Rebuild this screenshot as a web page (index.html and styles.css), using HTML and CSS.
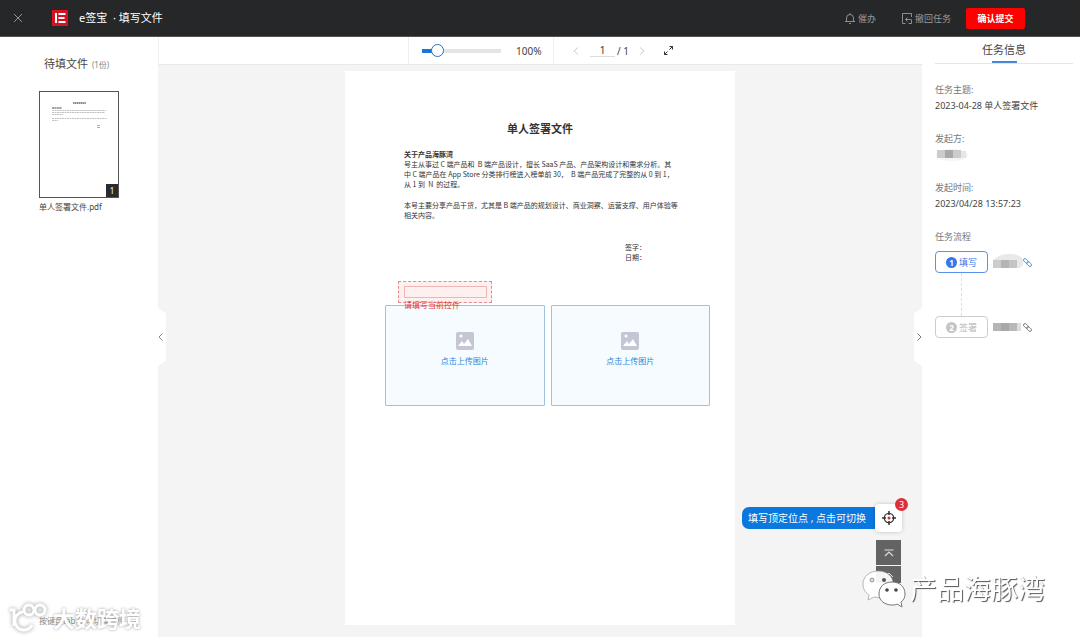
FILE: index.html
```html
<!DOCTYPE html>
<html lang="zh-CN">
<head>
    <meta charset="UTF-8">
    <meta name="viewport" content="width=device-width, initial-scale=1.0">
    <title>e签宝 · 填写文件</title>
    <link rel="stylesheet" href="styles.css">
</head>
<body>
<header class="header">
    <button class="icon-btn close" aria-label="关闭">
        <svg width="10" height="10" viewBox="0 0 10 10"><path d="M1 1l8 8M9 1l-8 8" stroke="#929292" fill="none"/></svg>
    </button>
    <svg class="logo" width="16" height="16" viewBox="0 0 16 16">
        <rect width="16" height="16" fill="#d5121e"/>
        <path d="M4 3v10M6.500 4h7M6.500 8h6M6.500 12h7" stroke="#fff" stroke-width="2" fill="none"/>
    </svg>
    <h1>e签宝 &nbsp;·&nbsp;填写文件</h1>
    <div class="header-actions">
        <button class="text-btn">
            <svg width="10" height="11" viewBox="0 0 10 11" fill="none" stroke="#999" stroke-width=".9"><path d="M1.500 8.500V5a3.500 3.500 0 0 1 7 0v3.500M0 8.500h10M4 10.500h2M5 1.500V0"/></svg>
            催办
        </button>
        <button class="text-btn recall">
            <svg width="10" height="11" viewBox="0 0 10 11" fill="none" stroke="#999" stroke-width=".9"><path d="M9.500 4V.5h-9v10h3M9.500 6.500v4h-3M9 6.500H3.500M5.500 4.500l-2 2 2 2"/></svg>
            撤回任务
        </button>
        <button class="submit">确认提交</button>
    </div>
</header>

<div class="container">
    <aside class="files">
        <h2>待填文件 <small>(1份)</small></h2>
        <a class="file" href="#doc">
            <span class="thumb">
                <svg width="78" height="105" viewBox="0 0 78 105" fill="none" stroke="#aaa">
                    <path d="M33 11h13" stroke="#666" stroke-width="1.500" stroke-dasharray="1.500 .4"/>
                    <path d="M12 16h10" stroke="#444" stroke-dasharray="2 .4"/>
                    <path d="M12 18.500h54M12 20.500h53M12 22.500h11M12 26.500h55M12 28.500h6" stroke-width=".7" stroke-dasharray="2 .5"/>
                    <path d="M57 33.500h3M57 35.500h3" stroke="#888" stroke-width=".7"/>
                </svg>
                <span class="page-no">1</span>
            </span>
            单人签署文件.pdf
        </a>
        <p class="hint">按键盘tab键 可切换文件</p>
        <button class="handle handle-left" aria-label="收起">
            <svg width="5" height="8" viewBox="0 0 5 8"><path d="M4.500.5L1 4l3.500 3.500" stroke="#888" fill="none"/></svg>
        </button>
    </aside>

    <main class="viewer">
        <div class="toolbar">
            <div class="zoom">
                <input type="range" min="0" max="100" value="14" aria-label="缩放">
                <span>100%</span>
            </div>
            <div class="pager">
                <button class="icon-btn" aria-label="上一页">
                    <svg width="6" height="8" viewBox="0 0 6 8"><path d="M5 .5L1 4l4 3.500" stroke="#ccc" fill="none"/></svg>
                </button>
                <input type="text" value="1" aria-label="页码">
                <span>/ 1</span>
                <button class="icon-btn next" aria-label="下一页">
                    <svg width="6" height="8" viewBox="0 0 6 8"><path d="M1 .5L5 4 1 7.500" stroke="#ccc" fill="none"/></svg>
                </button>
                <button class="icon-btn full" aria-label="全屏">
                    <svg width="9" height="9" viewBox="0 0 9 9"><path d="M5.500.5h3v3M8.500.5l-3 3M3.500 8.500h-3v-3M.5 8.500l3-3" stroke="#333" fill="none"/></svg>
                </button>
            </div>
        </div>

        <article class="page" id="doc">
            <h2>单人签署文件</h2>
            <div class="doc-text">
                <h3>关于产品海豚湾</h3>
                <p>号主从事过 C 端产品和&nbsp; B 端产品设计，擅长 SaaS 产品、产品架构设计和需求分析。其<br>
                中 C 端产品在 App Store 分类排行榜进入榜单前 30，&nbsp; B 端产品完成了完整的从 0 到 1，<br>
                从 1 到&nbsp; N&nbsp; 的过程。</p>
                <p>本号主要分享产品干货，尤其是 B 端产品的规划设计、商业洞察、运营支撑、用户体验等<br>
                相关内容。</p>
            </div>
            <p class="sign">签字：<br>日期：</p>
            <div class="field">
                <input type="text" id="field1" aria-describedby="field1-error" aria-label="填写控件">
                <label class="error" id="field1-error" for="field1">请填写当前控件</label>
            </div>
            <div class="uploads">
                <button class="upload">
                    <svg width="18" height="18" viewBox="0 0 18 18"><rect width="18" height="18" rx="2" fill="#c4c6d6"/><circle cx="5" cy="4" r="1.500" fill="#fff"/><path d="M2 14l4-5 2 3 4-5 4 7z" fill="#fff"/></svg>
                    点击上传图片
                </button>
                <button class="upload">
                    <svg width="18" height="18" viewBox="0 0 18 18"><rect width="18" height="18" rx="2" fill="#c4c6d6"/><circle cx="5" cy="4" r="1.500" fill="#fff"/><path d="M2 14l4-5 2 3 4-5 4 7z" fill="#fff"/></svg>
                    点击上传图片
                </button>
            </div>
        </article>

        <div class="float-tools">
            <div class="locator">
                <span class="tip">填写顶定位点 , 点击可切换</span>
                <button class="target" aria-label="定位">
                    <svg width="14" height="14" viewBox="0 0 14 14" fill="none" stroke="#333"><circle cx="7" cy="7" r="4.700" stroke-width="1.300"/><path d="M7 0v4M7 10v4M0 7h4M10 7h4" stroke-width="1.500"/><circle cx="7" cy="7" r="1.500" fill="#e02b33" stroke="none"/></svg>
                    <span class="count">3</span>
                </button>
            </div>
            <button class="jump" aria-label="回到顶部">
                <svg width="10" height="8" viewBox="0 0 10 8"><path d="M.5 1h9M1 7l4-4 4 4" stroke="#ddd" stroke-width="1.200" fill="none"/></svg>
            </button>
            <button class="jump jump-down" aria-label="上一项">
                <svg width="10" height="6" viewBox="0 0 10 6"><path d="M1 5l4-4 4 4" stroke="#ddd" fill="none"/></svg>
            </button>
        </div>
    </main>

    <aside class="info">
        <button class="handle handle-right" aria-label="收起">
            <svg width="5" height="8" viewBox="0 0 5 8"><path d="M.5.5L4 4 .5 7.500" stroke="#777" fill="none"/></svg>
        </button>
        <h2>任务信息</h2>
        <dl>
            <dt>任务主题:</dt>
            <dd>2023-04-28 单人签署文件</dd>
            <dt>发起方:</dt>
            <dd>
                <svg width="34" height="14" viewBox="0 0 34 14"><ellipse cx="17" cy="8" rx="16" ry="6" fill="#f5f5f5"/><path d="M2 3h8v8H2z" fill="#ccc"/><path d="M10 3h8v8h-8z" fill="#a9a9a9"/><path d="M18 3h8v8h-8z" fill="#ccc"/><path d="M26 4h5v7h-5z" fill="#e6e6e6"/></svg>
            </dd>
            <dt>发起时间:</dt>
            <dd>2023/04/28 13:57:23</dd>
        </dl>
        <h3>任务流程</h3>
        <ol class="steps">
            <li class="active">
                <button><b>1</b>填写</button>
                <svg class="name" width="31" height="20" viewBox="0 0 31 20"><path d="M1 8Q8 1 20 2q9 1 11 6v5l-3 3H1z" fill="#e9e9e9"/><path d="M1 8h8v8H1z" fill="#ccc"/><path d="M9 8h8v8H9z" fill="#b5b5b5"/><path d="M17 8h8v8h-8z" fill="#c4c4c4"/></svg>
                <a class="link" href="#link" aria-label="复制链接"><svg width="9" height="9" viewBox="0 0 9 9" fill="none" stroke="currentColor" stroke-width=".9"><g transform="rotate(45 4.500 4.500)"><rect x="-.5" y="3" width="5.500" height="3" rx="1.500"/><rect x="4" y="3" width="5.500" height="3" rx="1.500"/></g></svg></a>
            </li>
            <li>
                <button><b>2</b>签署</button>
                <svg class="name" width="31" height="16" viewBox="0 0 31 16"><path d="M1 4h28v8H1z" fill="#dedede"/><path d="M1 4h8v8H1z" fill="#b5b5b5"/><path d="M9 4h8v8H9z" fill="#a8a8a8"/><path d="M17 4h8v8h-8z" fill="#b8b8b8"/></svg>
                <a class="link" href="#link" aria-label="复制链接"><svg width="9" height="9" viewBox="0 0 9 9" fill="none" stroke="currentColor" stroke-width=".9"><g transform="rotate(45 4.500 4.500)"><rect x="-.5" y="3" width="5.500" height="3" rx="1.500"/><rect x="4" y="3" width="5.500" height="3" rx="1.500"/></g></svg></a>
            </li>
        </ol>
    </aside>
</div>

<div class="mark mark-left">
    <svg width="42" height="30" viewBox="0 0 42 30" fill="none" stroke="#fff" stroke-width="3">
        <path d="M2 7h4v16M15 9a9 9 0 1 0 9 13"/><circle cx="21" cy="7" r="5"/><circle cx="32" cy="7" r="5"/>
    </svg>
    <span>大数跨境</span>
</div>
<div class="mark mark-right">
    <svg width="44" height="38" viewBox="0 0 44 38">
        <path d="M16 1C7 1 1 7 1 14c0 5 2 8 6 11l-1 5 6-3c14 3 19-4 19-13C31 6 25 1 16 1z" fill="#fff" fill-opacity=".93" stroke="#999" stroke-width=".7"/>
        <circle cx="10" cy="10" r="2" fill="#ddd" stroke="#777" stroke-width=".7"/><circle cx="22" cy="10" r="2" fill="#555"/>
        <path d="M30 12c-8 0-13 5-13 12s6 11 13 11c2 0 4 0 5-1l5 3-1-5c3-2 4-5 4-8 0-7-5-12-13-12z" fill="#fff" stroke="#777"/>
        <circle cx="25" cy="20" r="1.800" fill="#444"/><circle cx="34" cy="20" r="1.800" fill="#444"/>
    </svg>
    <span>产品海豚湾</span>
</div>
</body>
</html>
```
FILE: styles.css
```css
* {
    box-sizing: border-box;
}

body {
    margin: 0;
    min-height: 100vh;
    display: flex;
    flex-direction: column;
    font-family: "Noto Sans", "Noto Sans CJK SC", sans-serif;
    font-size: 9px;
    color: #444;
    background-color: #fff;
}

h1, h2, h3, p, dl, dd, ol {
    margin: 0;
    padding: 0;
    font-weight: normal;
}

button {
    margin: 0;
    padding: 0;
    border: none;
    background: none;
    font: inherit;
    color: inherit;
    cursor: pointer;
}

svg {
    display: block;
    flex: none;
}

/* header */
.header {
    display: flex;
    align-items: center;
    height: 37px;
    padding: 0 55px 0 13px;
    background-color: #252729;
    border-bottom: 1px solid #505254;
}

.icon-btn {
    display: flex;
}

.logo {
    margin-left: 29px;
}

.header h1 {
    margin-left: 11px;
    font-size: 11px;
    line-height: 16px;
    color: #fff;
}

.header-actions {
    display: flex;
    align-items: center;
    margin-left: auto;
}

.text-btn {
    display: flex;
    align-items: center;
    gap: 3px;
    color: #999;
}

.recall {
    margin: 0 15px 0 26px;
}

.submit {
    width: 59px;
    height: 21px;
    border-radius: 2px;
    background-color: #fe0000;
    color: #fff;
    font-weight: bold;
}

/* layout */
.container {
    flex: 1;
    display: grid;
    grid-template-columns: 158px 1fr 158px;
}

.files,
.info {
    position: relative;
    background-color: #fff;
}

.files {
    display: flex;
    flex-direction: column;
    padding: 19px 0 8px 39px;
}

.files h2 {
    padding-left: 5px;
    font-size: 11px;
    line-height: 16px;
}

.files small {
    margin-left: 1px;
    font-size: 8px;
    color: #888;
}

.file {
    width: 80px;
    margin-top: 18px;
    color: #444;
    font-size: 8px;
    line-height: 18px;
    text-decoration: none;
    white-space: nowrap;
}

.thumb {
    position: relative;
    display: block;
    height: 107px;
    border: 1px solid #555;
}

.page-no {
    position: absolute;
    right: 0;
    bottom: 0;
    width: 12px;
    height: 13px;
    background-color: #2b2b2b;
    color: #fff;
    line-height: 13px;
    text-align: center;
}

.hint {
    margin-top: auto;
    font-size: 8px;
    line-height: 16px;
    color: #888;
}

.handle {
    position: absolute;
    z-index: 1;
    top: 50%;
    width: 8px;
    height: 58px;
    margin-top: -29px;
    display: flex;
    align-items: center;
    background-color: #fff;
}

.handle-left {
    right: -8px;
    clip-path: polygon(0 0, 100% 10%, 100% 90%, 0 100%);
}

.handle-right {
    left: -8px;
    justify-content: flex-end;
    clip-path: polygon(100% 0, 0 10%, 0 90%, 100% 100%);
}

/* viewer */
.viewer {
    position: relative;
    background-color: #f4f4f4;
    padding-bottom: 12px;
}

.toolbar {
    display: flex;
    height: 28px;
    padding-left: 249px;
    border-left: 1px solid #eee;
    border-bottom: 1px solid #e8e8e8;
    background-color: #fff;
    font-size: 10px;
}

.zoom,
.pager {
    display: flex;
    align-items: center;
}

.zoom {
    width: 146px;
    padding-left: 13px;
    border: solid #eee;
    border-width: 0 1px;
    gap: 15px;
}

.zoom input {
    appearance: none;
    width: 79px;
    height: 13px;
    margin: 0;
    background: linear-gradient(to right, #1677d8 20%, #e4e4e4 20%) center / 100% 4px no-repeat;
}

.zoom input::-webkit-slider-thumb {
    appearance: none;
    width: 13px;
    height: 13px;
    border: 1px solid #1677d8;
    border-radius: 50%;
    background-color: #fff;
}

.pager {
    padding-left: 19px;
}

.pager input {
    width: 25px;
    height: 13px;
    margin: 0 2px 0 11px;
    padding: 0;
    border: none;
    border-bottom: 1px solid #ddd;
    font: inherit;
    color: #333;
    text-align: center;
}

.next {
    margin-left: 10px;
}

.full {
    margin-left: 19px;
}

.page {
    width: 390px;
    min-height: 554px;
    margin: 6px auto 0;
    padding: 49px 25px 0 40px;
    background-color: #fff;
    color: #333;
    font-family: "Noto Sans CJK SC", sans-serif;
    font-size: 7px;
    line-height: 10px;
}

.page h2 {
    padding-right: 15px;
    font-size: 11px;
    line-height: 16px;
    font-weight: bold;
    text-align: center;
}

.doc-text {
    margin: 13px 0 0 19px;
    white-space: nowrap;
}

.doc-text h3 {
    font-size: 7px;
    font-weight: bold;
}

.doc-text p + p {
    margin-top: 11px;
}

.sign {
    margin: 22px 0 0 240px;
}

.field {
    position: relative;
    width: 94px;
    height: 22px;
    margin: 19px 0 2px 13px;
    padding: 4px 5px;
    border: 1px dashed #e58a8f;
    background-color: #fff0f0;
}

.field input {
    display: block;
    width: 83px;
    height: 12px;
    border: 1px solid #f2b4b7;
    background-color: #fff0f0;
}

.error {
    position: absolute;
    left: 5px;
    top: 18px;
    color: #e0373e;
    font-size: 8px;
    white-space: nowrap;
}

.uploads {
    display: grid;
    grid-template-columns: 1fr 1fr;
    gap: 6px;
}

.upload {
    display: flex;
    flex-direction: column;
    align-items: center;
    height: 101px;
    padding-top: 26px;
    gap: 6px;
    border: 1px solid #9cc3e0;
    border-radius: 1px;
    background-color: #f5fbff;
    color: #2a86dc;
    font-size: 8px;
}

/* floating tools */
.float-tools {
    position: absolute;
    right: 20px;
    bottom: 54px;
    display: flex;
    flex-direction: column;
    align-items: flex-end;
}

.locator {
    display: flex;
    align-items: center;
    margin-bottom: 8px;
}

.tip {
    padding: 0 9px 0 6px;
    border-radius: 7px 0 0 7px;
    background-color: #0b78de;
    color: #fff;
    font-size: 10px;
    line-height: 22px;
}

.target {
    position: relative;
    width: 27px;
    height: 28px;
    display: flex;
    align-items: center;
    justify-content: center;
    border-radius: 4px;
    background-color: #fff;
    box-shadow: 0 0 4px rgba(0, 0, 0, 0.2);
}

.count {
    position: absolute;
    top: -6px;
    right: -6px;
    width: 13px;
    height: 13px;
    border-radius: 50%;
    background-color: #dc3038;
    color: #fff;
    font-size: 9px;
    line-height: 13px;
}

.jump {
    width: 25px;
    height: 25px;
    margin-right: 1px;
    display: flex;
    align-items: center;
    justify-content: center;
    background-color: #636363;
}

.jump-down {
    height: 17px;
    margin-top: 1px;
}

/* task info */
.info {
    padding: 5px 7px 0 13px;
}

.info h2 {
    position: relative;
    height: 22px;
    border-bottom: 1px solid #e6e6e6;
    font-size: 11px;
    line-height: 16px;
    text-align: center;
}

.info h2::after {
    content: "";
    position: absolute;
    left: 50%;
    bottom: 0;
    width: 25px;
    height: 2px;
    margin-left: -12px;
    background-color: #4a86d8;
}

.info dl {
    padding-top: 18px;
    line-height: 16px;
}

.info dt,
.info h3 {
    color: #777;
    font-size: 9px;
    line-height: 16px;
}

.info dd {
    height: 16px;
    margin-bottom: 17px;
    white-space: nowrap;
}

.steps {
    margin-top: 6px;
    list-style: none;
}

.steps li {
    position: relative;
    display: flex;
    align-items: center;
    gap: 4px;
    margin-bottom: 43px;
}

.steps li.active::after {
    content: "";
    position: absolute;
    left: 26px;
    top: 22px;
    height: 43px;
    border-left: 1px dashed #ddd;
}

.steps button {
    display: flex;
    align-items: center;
    justify-content: center;
    gap: 2px;
    width: 53px;
    height: 22px;
    border: 1px solid #ccc;
    border-radius: 4px;
    color: #bbb;
}

.steps b {
    width: 11px;
    height: 11px;
    border-radius: 50%;
    background-color: #c4c4c4;
    color: #fff;
    font-size: 8px;
    line-height: 11px;
}

.steps .active button {
    border-color: #5a92e8;
    color: #3478e5;
}

.steps .active b {
    background-color: #3478e5;
}

.link {
    margin-left: -4px;
    color: #777;
}

.active .link {
    color: #4c94dd;
}

/* watermarks */
.mark {
    position: fixed;
    z-index: 2;
    display: flex;
    align-items: center;
    color: #fff;
    pointer-events: none;
    white-space: nowrap;
}

.mark-left {
    left: 8px;
    bottom: 3px;
    gap: 3px;
    font-size: 22px;
    font-weight: bold;
    line-height: 32px;
    text-shadow: 0 0 3px #999;
}

.mark-left svg {
    overflow: visible;
    filter: drop-shadow(0 0 2px #999);
}

.mark-right {
    right: 35px;
    bottom: 29px;
    gap: 4px;
    font-size: 27px;
    line-height: 38px;
    text-shadow: 1px 1px 1px #555;
}
```
